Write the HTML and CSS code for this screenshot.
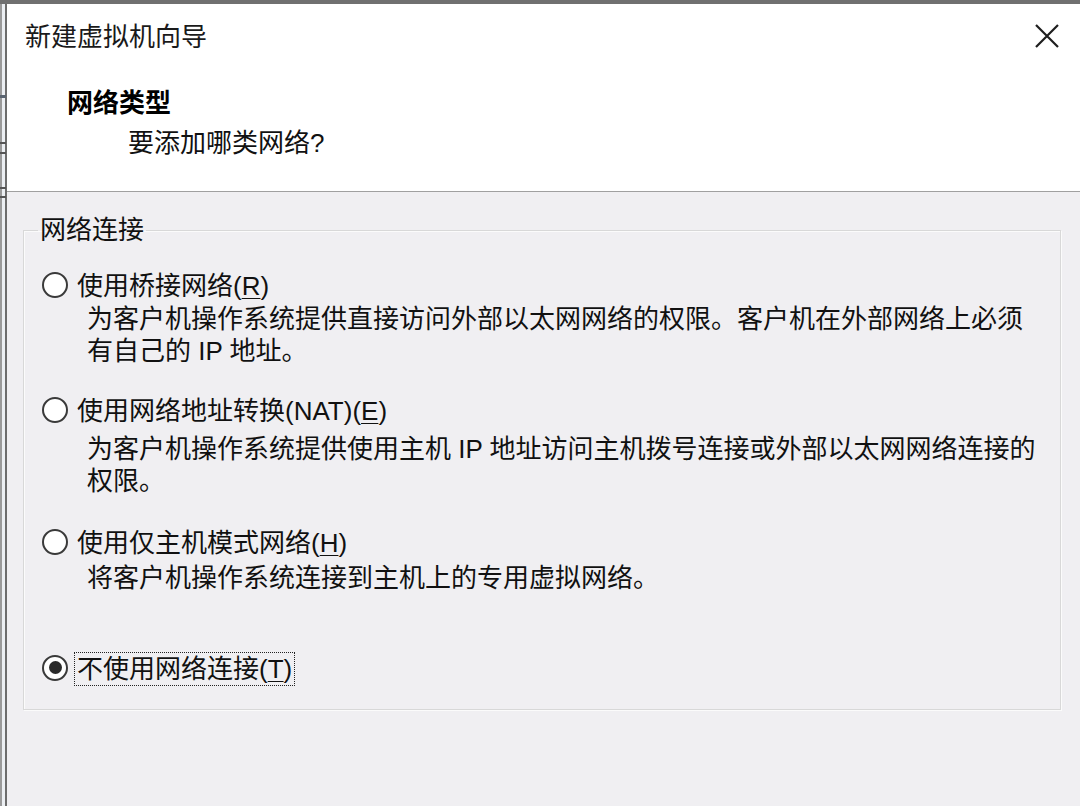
FILE: index.html
```html
<!DOCTYPE html>
<html lang="zh-CN">
<head>
<meta charset="utf-8">
<title>新建虚拟机向导</title>
<link rel="stylesheet" href="styles.css">
</head>
<body>
<div class="screen">
  <div class="topbar"></div>
  <div class="main">
    <div class="side"></div>
    <div class="dialog">
      <header class="head">
        <div class="titlebar">
          <span class="title">新建虚拟机向导</span>
          <span class="close" aria-label="关闭">
            <svg width="26" height="26" viewBox="0 0 26 26"><path d="M2 2 L24 24 M24 2 L2 24" stroke="#1e1e1e" stroke-width="2.2" fill="none"/></svg>
          </span>
        </div>
        <div class="heading">网络类型</div>
        <div class="sub">要添加哪类网络?</div>
      </header>
      <div class="body">
        <fieldset class="group">
          <legend>网络连接</legend>
          <div class="opt opt1">
            <div class="row"><span class="radio"></span><span class="lbl">使用桥接网络(<u>R</u>)</span></div>
            <p class="desc">为客户机操作系统提供直接访问外部以太网网络的权限。客户机在外部网络上必须<br>有自己的 IP 地址。</p>
          </div>
          <div class="opt opt2">
            <div class="row"><span class="radio"></span><span class="lbl">使用网络地址转换(NAT)(<u>E</u>)</span></div>
            <p class="desc">为客户机操作系统提供使用主机 IP 地址访问主机拨号连接或外部以太网网络连接的<br>权限。</p>
          </div>
          <div class="opt opt3">
            <div class="row"><span class="radio"></span><span class="lbl">使用仅主机模式网络(<u>H</u>)</span></div>
            <p class="desc">将客户机操作系统连接到主机上的专用虚拟网络。</p>
          </div>
          <div class="opt opt4">
            <div class="row"><span class="radio checked"></span><span class="lbl focus">不使用网络连接(<u>T</u>)</span></div>
          </div>
        </fieldset>
      </div>
    </div>
  </div>
</div>
</body>
</html>
```

FILE: styles.css
```css
* { box-sizing: border-box; }

html, body {
  margin: 0;
  padding: 0;
  width: 1080px;
  height: 806px;
  overflow: hidden;
  background: #f0eff2;
  font-family: "Liberation Sans", "Noto Sans CJK SC", sans-serif;
  color: #111;
  font-size: 26px;
}

.screen {
  display: flex;
  flex-direction: column;
  width: 1080px;
  height: 806px;
}

.topbar {
  height: 4px;
  background: #707070;
  flex: none;
}

.main {
  flex: 1;
  display: flex;
}

.side {
  width: 7px;
  flex: none;
  background:
    linear-gradient(#5a6470, #5a6470) 0 91px / 6px 3px no-repeat,
    linear-gradient(#555, #555) 0 138px / 6px 2px no-repeat,
    linear-gradient(#555, #555) 0 148px / 6px 2px no-repeat,
    linear-gradient(#555, #555) 0 183px / 6px 2px no-repeat,
    linear-gradient(#555, #555) 0 192px / 6px 2px no-repeat,
    linear-gradient(to right, #9a9a9a 0 2px, #eceff3 2px 5px, #6c6c6c 5px 7px);
}

.dialog {
  flex: 1;
  display: flex;
  flex-direction: column;
}

.head {
  background: #fff;
  padding: 17px 20px 32px 18px;
  border-bottom: 1px solid #a0a0a0;
  box-shadow: 0 1px 0 #fbfbfb;
}

.titlebar {
  display: flex;
  justify-content: space-between;
  align-items: center;
  height: 32px;
  line-height: 32px;
}

.title {
  color: #1a1a1a;
}

.close {
  display: flex;
  width: 26px;
  height: 26px;
  margin-top: -3px;
}

.heading {
  margin-top: 34px;
  margin-left: 42px;
  line-height: 32px;
  font-weight: 700;
  color: #000;
}

.sub {
  margin-top: 8px;
  margin-left: 103px;
  line-height: 32px;
}

.body {
  flex: 1;
  background: #f0eff2;
  padding: 22px 19px 0 16px;
}

.group {
  margin: 0;
  padding: 23px 18px 23px 18px;
  border: 1px solid #d8d8d8;
  box-shadow: inset 1px 1px 0 #fbfbfb, 1px 1px 0 #fbfbfb;
  display: flex;
  flex-direction: column;
}

.group legend {
  padding: 0 2px;
  margin-left: -4px;
  line-height: 32px;
  color: #111;
}

.opt {
  display: flex;
  flex-direction: column;
}

.opt2 { margin-top: 27px; }
.opt3 { margin-top: 29px; }
.opt4 { margin-top: 58px; }

.row {
  display: flex;
  align-items: center;
  gap: 6px;
  height: 34px;
}

.radio {
  width: 26px;
  height: 26px;
  border-radius: 50%;
  border: 2px solid #3a3a3a;
  background: #fff;
  flex: none;
  display: flex;
  align-items: center;
  justify-content: center;
  margin-top: -3px;
}

.radio.checked::after {
  content: "";
  width: 13px;
  height: 13px;
  border-radius: 50%;
  background: #2a2a2a;
}

.lbl {
  line-height: 32px;
  padding: 0 2px;
  border: 1px solid transparent;
  white-space: nowrap;
}

.lbl.focus {
  border: 1px dotted #222;
}

.lbl u {
  text-decoration-thickness: 1px;
  text-underline-offset: 3px;
}

.desc {
  margin: 0 0 0 45px;
  line-height: 32px;
  white-space: nowrap;
}

.opt2 .desc { margin-top: 5px; }
.opt3 .desc { margin-top: 2px; }
```
